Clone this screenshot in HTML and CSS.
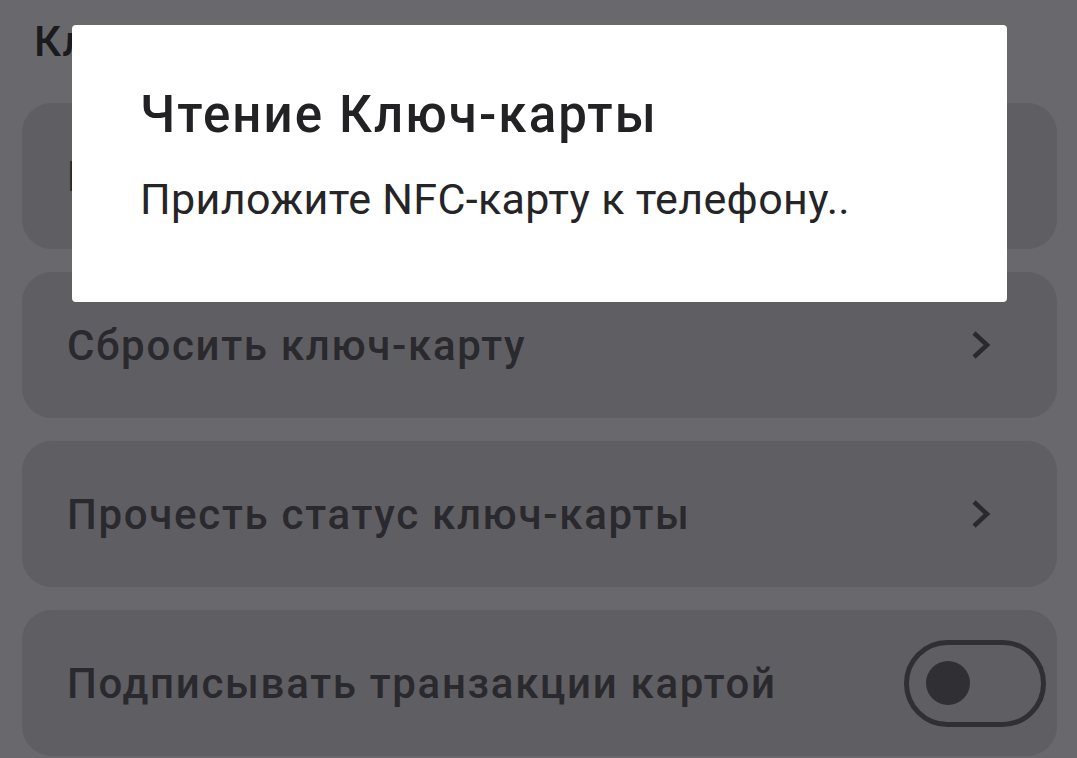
FILE: index.html
```html
<!DOCTYPE html>
<html>
	<head>
		<meta charset="UTF-8">
		<title>Ключ-карта</title>
		<link rel="stylesheet" href="styles.css">
	</head>
	<body>
		<div class="page">
			<h1 class="page-title">Ключ-карта</h1>
			<ul class="menu">
				<li class="menu-item">
					<span>Привязать ключ-карту</span>
					<svg class="chevron" viewBox="0 0 24 32"><path d="M5 4 L18 16 L5 28" /></svg>
				</li>
				<li class="menu-item">
					<span>Сбросить ключ-карту</span>
					<svg class="chevron" viewBox="0 0 24 32"><path d="M5 4 L18 16 L5 28" /></svg>
				</li>
				<li class="menu-item">
					<span>Прочесть статус ключ-карты</span>
					<svg class="chevron" viewBox="0 0 24 32"><path d="M5 4 L18 16 L5 28" /></svg>
				</li>
				<li class="menu-item">
					<span>Подписывать транзакции картой</span>
					<div class="switch"><i></i></div>
				</li>
			</ul>
		</div>
		<!-- диалог чтения карты -->
		<div class="dialog">
			<h2 class="dialog-title">Чтение Ключ-карты</h2>
			<p class="dialog-text">Приложите NFC-карту к телефону..</p>
		</div>
	</body>
</html>
```

FILE: styles.css
```css
*{margin:0;padding:0;box-sizing:border-box;font-family:Roboto,"Noto Sans",sans-serif;}
ul,ol{list-style:none;}
html,body{
	height:100%;
	overflow:hidden;
}
body{
	background:#69686c;
}
.page{
	padding:18px 20px 0 22px;
}
.page-title{
	font-size:42px;
	font-weight:500;
	letter-spacing:1.5px;
	color:#1b1a1d;
	line-height:48px;
	padding-left:12px;
	margin-bottom:37px;
}
.menu{
	display:flex;
	flex-direction:column;
	gap:23px;
}
.menu-item{
	height:146px;
	border-radius:30px;
	background:#5f5e62;
	display:flex;
	align-items:center;
	justify-content:space-between;
	padding:0 66px 0 45px;
	font-size:42px;
	font-weight:500;
	letter-spacing:1.7px;
	color:#2a292d;
}
.chevron{
	width:24px;
	height:32px;
	margin-right:-2px;
}
.chevron path{
	fill:none;
	stroke:#2a292d;
	stroke-width:4.5;
}
.menu-item:last-child{
	padding-right:11px;
}
.switch{
	width:142px;
	height:87px;
	border:5px solid #302f33;
	border-radius:44px;
	display:flex;
	align-items:center;
	padding-left:17px;
}
.switch i{
	width:44px;
	height:44px;
	border-radius:50%;
	background:#302f33;
}
.dialog{
	position:absolute;
	left:72px;
	top:25px;
	width:935px;
	height:277px;
	background:#fff;
	border-radius:4px;
	padding:60px 68px 0;
}
.dialog-title{
	font-size:51px;
	font-weight:500;
	letter-spacing:2.1px;
	color:#222124;
	line-height:60px;
	margin-bottom:28px;
}
.dialog-text{
	font-size:43px;
	letter-spacing:0.35px;
	color:#252427;
	line-height:52px;
}
```
